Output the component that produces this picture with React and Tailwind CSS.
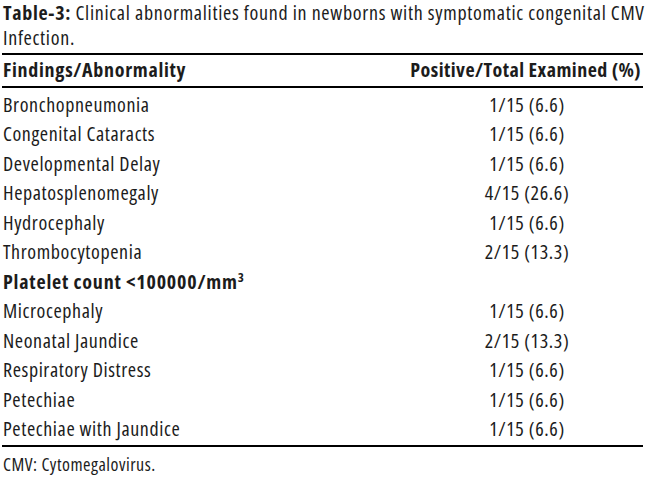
import React from 'react';

const rows = [
  { name: 'Bronchopneumonia', value: '1/15 (6.6)' },
  { name: 'Congenital Cataracts', value: '1/15 (6.6)' },
  { name: 'Developmental Delay', value: '1/15 (6.6)' },
  { name: 'Hepatosplenomegaly', value: '4/15 (26.6)' },
  { name: 'Hydrocephaly', value: '1/15 (6.6)' },
  { name: 'Thrombocytopenia', value: '2/15 (13.3)' },
  { name: 'platelet', value: '' },
  { name: 'Microcephaly', value: '1/15 (6.6)' },
  { name: 'Neonatal Jaundice', value: '2/15 (13.3)' },
  { name: 'Respiratory Distress', value: '1/15 (6.6)' },
  { name: 'Petechiae', value: '1/15 (6.6)' },
  { name: 'Petechiae with Jaundice', value: '1/15 (6.6)' },
];

function App() {
  return (
    <div className="w-[650px] h-[482px] bg-white text-[#1c1c1c] overflow-hidden font-['Open_Sans',sans-serif] [font-stretch:75%]">
      {/* caption */}
      <p className="px-[3px] text-[20px] leading-[25px] tracking-[0.7px]">
        <span className="font-bold">Table-3:</span> Clinical abnormalities found in newborns with symptomatic congenital CMV Infection.
      </p>

      {/* table */}
      <div className="mx-[2px] w-[641px] mt-[3px] border-t-[2px] border-b-[2px] border-black">
        <div className="flex items-center h-[33px] pb-[2px] border-b-[2px] border-black font-bold text-[20px]">
          <div className="flex-1 pl-[1px] tracking-[0.7px]">Findings/Abnormality</div>
          <div className="w-[238px] text-right pr-[2px] whitespace-nowrap tracking-[0.45px]">Positive/Total Examined (%)</div>
        </div>
        <div className="pt-[2px] pb-[1px]">
          {rows.map((r) => (
            <div key={r.name} className="flex items-center h-[29.5px] text-[20px] tracking-[0.6px]">
              {r.name === 'platelet' ? (
                <div className="flex-1 pl-[1px] font-bold tracking-[0.8px]">
                  Platelet count &lt;100000/mm<sup className="text-[13px]">3</sup>
                </div>
              ) : (
                <div className="flex-1 pl-[1px]">{r.name}</div>
              )}
              <div className="w-[238px] text-center pl-[6px]">{r.value}</div>
            </div>
          ))}
        </div>
      </div>

      <p className="px-[3px] mt-[7px] text-[18px] leading-[20px] tracking-[0.5px]">CMV: Cytomegalovirus.</p>
    </div>
  );
}

export default App;
